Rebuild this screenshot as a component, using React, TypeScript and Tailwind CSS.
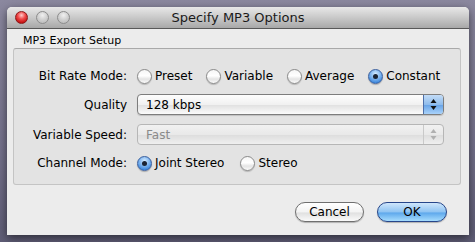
import React from "react";

const font = { fontFamily: '"DejaVu Sans", "Liberation Sans", sans-serif' };

function Radio({ checked }: { checked?: boolean }) {
  return checked ? (
    <span className="relative flex h-[15px] w-[15px] shrink-0 items-center justify-center rounded-full border border-[#3a5f9e] bg-[radial-gradient(circle_at_50%_30%,#d6ecff_0%,#7fb5ef_45%,#3b86dc_80%,#5aa2ee_100%)] shadow-[0_1px_1px_rgba(0,0,0,0.25)]">
      <span className="h-[5px] w-[5px] rounded-full bg-[#1b2433]" />
    </span>
  ) : (
    <span className="h-[15px] w-[15px] shrink-0 rounded-full border border-[#8a8a8a] bg-[linear-gradient(#f6f6f6,#ffffff_45%,#e4e4e4_70%,#fafafa)] shadow-[0_1px_1px_rgba(0,0,0,0.2)]" />
  );
}

function RadioItem({ label, checked }: { label: string; checked?: boolean }) {
  return (
    <div className="flex items-center gap-[3px]">
      <Radio checked={checked} />
      <span>{label}</span>
    </div>
  );
}

function Stepper({ disabled }: { disabled?: boolean }) {
  const c = disabled ? "#b0b0b0" : "#111";
  return (
    <svg width="7" height="13" viewBox="0 0 7 13">
      <path d="M3.5 1 L6.5 5 L0.5 5 Z" fill={c} />
      <path d="M3.5 12 L6.5 8 L0.5 8 Z" fill={c} />
    </svg>
  );
}

export default function App() {
  return (
    <div
      className="h-[242px] w-[475px] overflow-hidden bg-[linear-gradient(#8b889f,#75728c_60%,#5f5d76)] pl-[7px] pt-[7px] text-[12px] text-black"
      style={font}
    >
      <div className="flex h-[228px] w-[462px] flex-col overflow-hidden rounded-t-[5px] bg-[#ececec] shadow-[0_3px_10px_rgba(0,0,0,0.55)]">
        {/* title bar */}
        <div className="relative flex h-[22px] shrink-0 items-center justify-center border-b border-[#585858] bg-[linear-gradient(#e8e8e8,#c9c9c9_50%,#a8a8a8)]">
          <div className="absolute left-[8px] top-[4px] flex gap-[8px]">
            <span className="h-[13px] w-[13px] rounded-full border border-[#8a1a1a] bg-[radial-gradient(circle_at_50%_30%,#ffc9c9_0%,#f04a4a_40%,#c30f0f_80%,#e84040_100%)]" />
            <span className="h-[13px] w-[13px] rounded-full border border-[#8c8c8c] bg-[radial-gradient(circle_at_50%_30%,#f0f0f0_0%,#cfcfcf_50%,#b5b5b5_100%)]" />
            <span className="h-[13px] w-[13px] rounded-full border border-[#8c8c8c] bg-[radial-gradient(circle_at_50%_30%,#f0f0f0_0%,#cfcfcf_50%,#b5b5b5_100%)]" />
          </div>
          <span className="text-[13px] text-[#1a1a1a]">Specify MP3 Options</span>
        </div>

        {/* content */}
        <div className="flex flex-1 flex-col px-[6px] pt-[5px]">
          <div className="pl-[10px] text-[11px] leading-[14px]">MP3 Export Setup</div>
          <div className="h-[137px] w-[448px] rounded-[3px] border border-[#c4c4c4] border-t-[#a9a9a9] bg-[#e3e3e3] pt-[17px]">
            {/* row 1 */}
            <div className="flex h-[20px] items-center">
              <div className="w-[113px] shrink-0 text-right">Bit Rate Mode:</div>
              <div className="ml-[10px] flex items-center gap-[14px]">
                <RadioItem label="Preset" />
                <RadioItem label="Variable" />
                <RadioItem label="Average" />
                <RadioItem label="Constant" checked />
              </div>
            </div>
            {/* row 2 */}
            <div className="mt-[8px] flex h-[21px] items-center">
              <div className="w-[113px] shrink-0 text-right">Quality</div>
              <div className="ml-[10px] flex h-[21px] w-[307px] overflow-hidden rounded-[4px] border border-[#7d7d7d] bg-[linear-gradient(#fdfdfd,#f1f1f1_50%,#e2e2e2_55%,#fbfbfb)] shadow-[0_1px_1px_rgba(0,0,0,0.15)]">
                <div className="flex flex-1 items-center pl-[8px]">128 kbps</div>
                <div className="flex w-[20px] items-center justify-center border-l border-[#4e6fa8] bg-[linear-gradient(#c3dcf7,#8fbcec_50%,#6ba6e8_55%,#a9d2fa)]">
                  <Stepper />
                </div>
              </div>
            </div>
            {/* row 3 */}
            <div className="mt-[9px] flex h-[21px] items-center">
              <div className="w-[113px] shrink-0 text-right">Variable Speed:</div>
              <div className="ml-[10px] flex h-[21px] w-[307px] overflow-hidden rounded-[4px] border border-[#b6b6b6] bg-[linear-gradient(#f1f1f1,#e9e9e9_50%,#dedede_55%,#efefef)]">
                <div className="flex flex-1 items-center pl-[8px] text-[#8a8a8a]">Fast</div>
                <div className="flex w-[20px] items-center justify-center border-l border-[#c9c9c9]">
                  <Stepper disabled />
                </div>
              </div>
            </div>
            {/* row 4 */}
            <div className="mt-[8px] flex h-[20px] items-center">
              <div className="w-[113px] shrink-0 text-right">Channel Mode:</div>
              <div className="ml-[10px] flex items-center gap-[16px]">
                <RadioItem label="Joint Stereo" checked />
                <RadioItem label="Stereo" />
              </div>
            </div>
          </div>

          {/* buttons */}
          <div className="mt-[17px] flex justify-end gap-[13px] pr-[16px]">
            <button className="flex h-[20px] w-[69px] items-center justify-center rounded-full border border-[#6f6f6f] bg-[linear-gradient(#ffffff,#f3f3f3_50%,#e0e0e0_55%,#fafafa)] text-[12px] shadow-[0_1px_1px_rgba(0,0,0,0.25)]">
              Cancel
            </button>
            <button className="flex h-[20px] w-[70px] items-center justify-center rounded-full border border-[#27468a] bg-[linear-gradient(#cfe6fb,#8ec3f2_50%,#5ea8ec_55%,#a6dcfd)] text-[12px] shadow-[0_1px_1px_rgba(0,0,0,0.25)]">
              OK
            </button>
          </div>
        </div>
      </div>
    </div>
  );
}
